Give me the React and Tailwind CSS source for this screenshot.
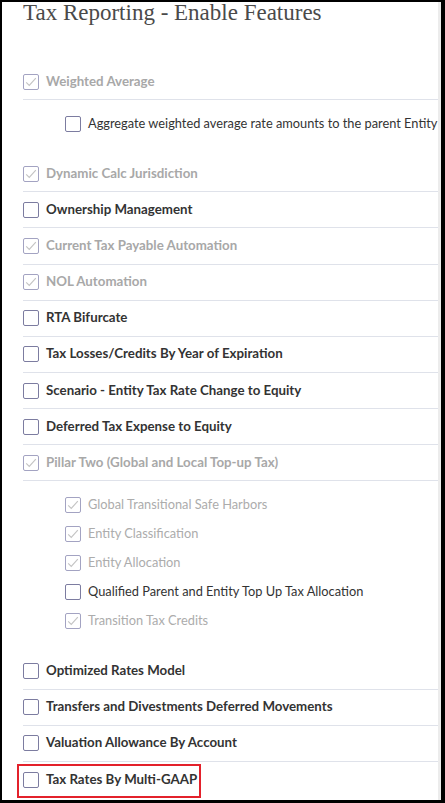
import React from "react";

const features = [
  {
    label: "Weighted Average",
    checked: true,
    disabled: true,
    children: [{ label: "Aggregate weighted average rate amounts to the parent Entity" }],
  },
  { label: "Dynamic Calc Jurisdiction", checked: true, disabled: true },
  { label: "Ownership Management" },
  { label: "Current Tax Payable Automation", checked: true, disabled: true },
  { label: "NOL Automation", checked: true, disabled: true },
  { label: "RTA Bifurcate" },
  { label: "Tax Losses/Credits By Year of Expiration" },
  { label: "Scenario - Entity Tax Rate Change to Equity" },
  { label: "Deferred Tax Expense to Equity" },
  {
    label: "Pillar Two (Global and Local Top-up Tax)",
    checked: true,
    disabled: true,
    children: [
      { label: "Global Transitional Safe Harbors", checked: true, disabled: true },
      { label: "Entity Classification", checked: true, disabled: true },
      { label: "Entity Allocation", checked: true, disabled: true },
      { label: "Qualified Parent and Entity Top Up Tax Allocation" },
      { label: "Transition Tax Credits", checked: true, disabled: true },
    ],
  },
  { label: "Optimized Rates Model" },
  { label: "Transfers and Divestments Deferred Movements" },
  { label: "Valuation Allowance By Account" },
  { label: "Tax Rates By Multi-GAAP", highlight: true, last: true },
];

function Box({ checked, disabled }) {
  return (
    <span
      className={`flex h-4 w-4 shrink-0 items-center justify-center rounded-[2px] border bg-white ${
        disabled ? "border-[#a3a3c2]" : "border-[#7c7ca0]"
      }`}
    >
      {checked && (
        <svg viewBox="0 0 16 16" className="h-[14px] w-[14px]" fill="none">
          <path d="M2.5 8.5 L6 12 L13.5 3.5" stroke="#c4c4c4" strokeWidth="1.3" />
        </svg>
      )}
    </span>
  );
}

function SubRow({ item }) {
  return (
    <div className="flex h-[29px] items-center gap-[7px] pl-[42px]">
      <Box checked={item.checked} disabled={item.disabled} />
      <span
        className={`whitespace-nowrap text-[12.8px] ${item.disabled ? "text-[#acacac]" : "text-[#333]"}`}
      >
        {item.label}
      </span>
    </div>
  );
}

function FeatureRow({ item }) {
  return (
    <div>
      <div
        className={`relative flex h-[36.15px] items-center gap-[7px] ${
          item.last ? "" : "border-b border-[#dfe2ea]"
        }`}
      >
        <Box checked={item.checked} disabled={item.disabled} />
        <span
          className={`whitespace-nowrap text-[13.3px] font-bold ${
            item.disabled ? "text-[#a8a8a8]" : "text-[#333]"
          }`}
        >
          {item.label}
        </span>
        {item.highlight && (
          <div className="absolute left-[-6px] top-[2px] h-[34px] w-[184px] border-2 border-[#e3212b]" />
        )}
      </div>
      {item.children && (
        <div className="pt-[9px] pb-[18px]">
          {item.children.map((c) => (
            <SubRow key={c.label} item={c} />
          ))}
        </div>
      )}
    </div>
  );
}

export default function App() {
  return (
    <div className="h-[803px] w-[445px] overflow-hidden border-t-2 border-l-2 border-r-4 border-b-[3px] border-black bg-white">
      <div
        className="h-full border-r-[3px] border-[#ececec] pl-[21px]"
        style={{ fontFamily: "Lato, 'Noto Sans', sans-serif" }}
      >
        <h1
          className="text-[23px] leading-[22px] text-[#4a4a4a]"
          style={{ fontFamily: "'Liberation Serif', 'DejaVu Serif', serif" }}
        >
          Tax Reporting - Enable Features
        </h1>
        <div className="mt-[40px]">
          {features.map((f) => (
            <FeatureRow key={f.label} item={f} />
          ))}
        </div>
      </div>
    </div>
  );
}
